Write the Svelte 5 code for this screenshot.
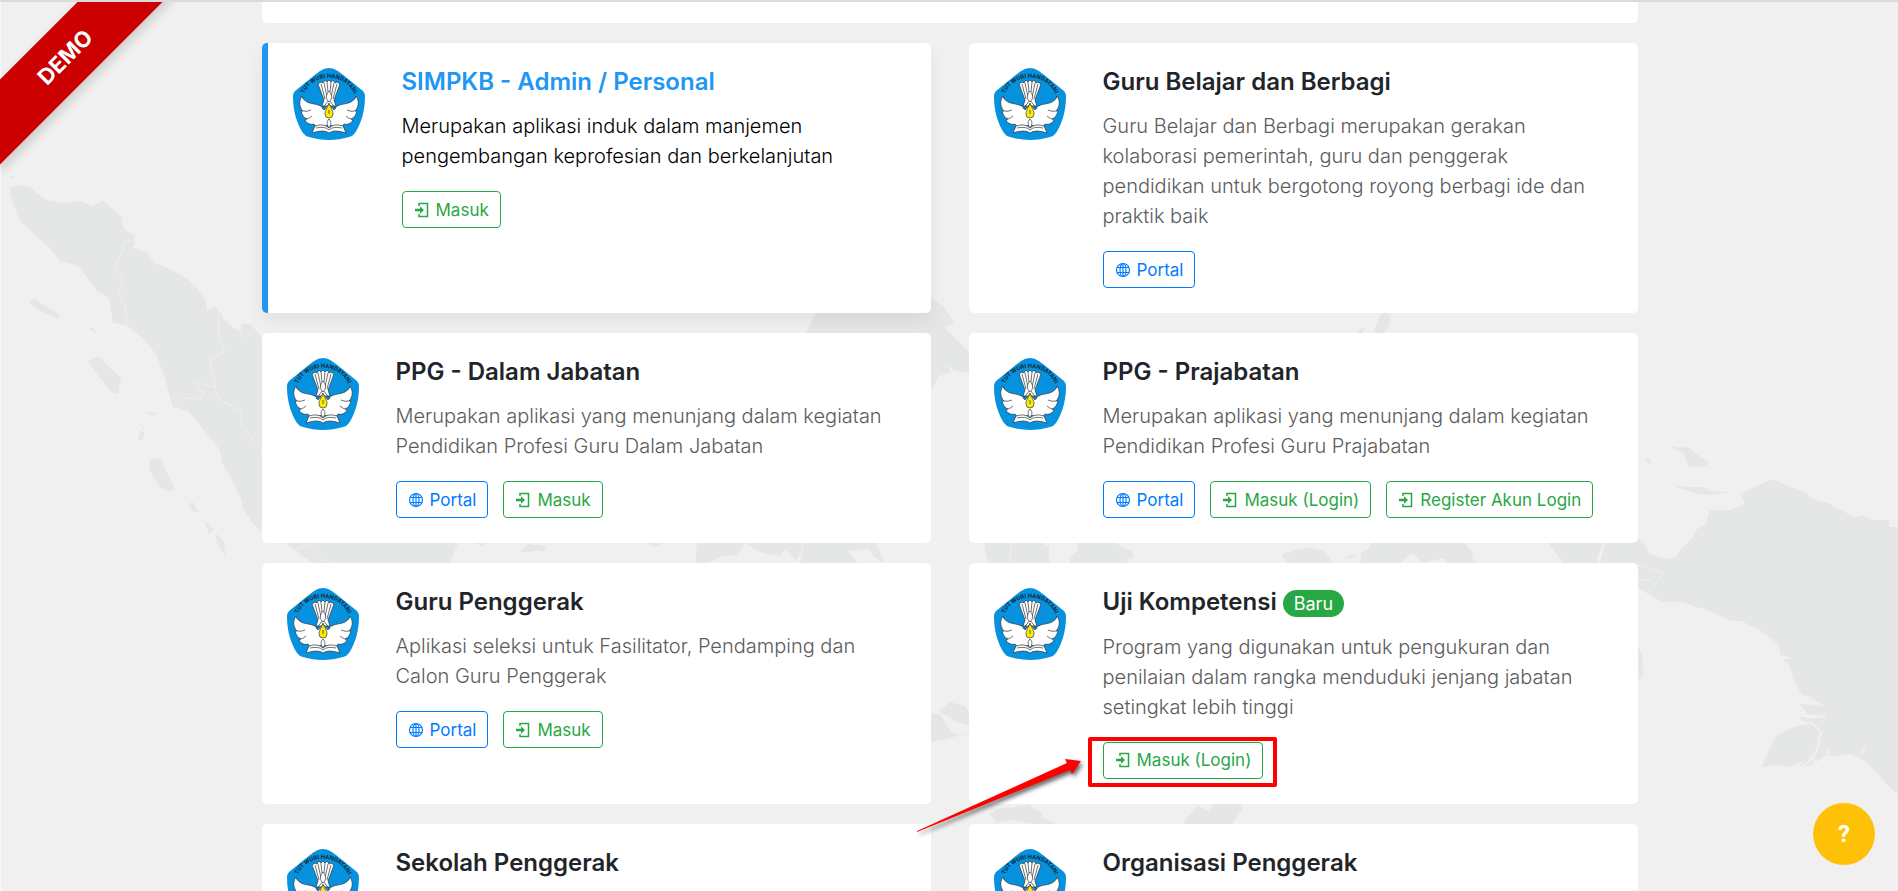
<script lang="ts">
  type Action = { label: string; kind: 'portal' | 'login'; marked?: boolean };
  type App = {
    title: string;
    text: string;
    actions: Action[];
    primary?: boolean;
    badge?: string;
  };

  const login = (label = 'Masuk', marked = false): Action => ({ label, kind: 'login', marked });
  const portal: Action = { label: 'Portal', kind: 'portal' };

  const apps: App[] = [
    {
      title: 'SIMPKB - Admin / Personal',
      text: 'Merupakan aplikasi induk dalam manjemen pengembangan keprofesian dan berkelanjutan',
      actions: [login()],
      primary: true
    },
    {
      title: 'Guru Belajar dan Berbagi',
      text: 'Guru Belajar dan Berbagi merupakan gerakan kolaborasi pemerintah, guru dan penggerak pendidikan untuk bergotong royong berbagi ide dan praktik baik',
      actions: [portal]
    },
    {
      title: 'PPG - Dalam Jabatan',
      text: 'Merupakan aplikasi yang menunjang dalam kegiatan Pendidikan Profesi Guru Dalam Jabatan',
      actions: [portal, login()]
    },
    {
      title: 'PPG - Prajabatan',
      text: 'Merupakan aplikasi yang menunjang dalam kegiatan Pendidikan Profesi Guru Prajabatan',
      actions: [portal, login('Masuk (Login)'), login('Register Akun Login')]
    },
    {
      title: 'Guru Penggerak',
      text: 'Aplikasi seleksi untuk Fasilitator, Pendamping dan Calon Guru Penggerak',
      actions: [portal, login()]
    },
    {
      title: 'Uji Kompetensi',
      badge: 'Baru',
      text: 'Program yang digunakan untuk pengukuran dan penilaian dalam rangka menduduki jenjang jabatan setingkat lebih tinggi',
      actions: [login('Masuk (Login)', true)]
    },
    { title: 'Sekolah Penggerak', text: '', actions: [] },
    { title: 'Organisasi Penggerak', text: '', actions: [] }
  ];
</script>

{#snippet logo()}
  <svg class="logo" viewBox="0 0 72 72" aria-hidden="true">
    <defs>
      <path id="motto-arc" d="M9 32A27.500 27.500 0 0 1 63 32" />
    </defs>
    <path fill="#0792df" d="M36 0C41 0 45 3 49 6L70 23Q72 25 72 29C72 43 68 56 62 65Q60 68 56 69C43 73 29 73 16 69Q12 68 10 65C4 56 0 43 0 29Q0 25 2 23L23 6C27 3 31 0 36 0Z" />
    <text class="motto"><textPath href="#motto-arc" startOffset="50%" text-anchor="middle">TUT WURI HANDAYANI</textPath></text>
    <g fill="#fff" stroke="#30343a" stroke-width="0.7" stroke-linejoin="round">
      <path d="M29 38L31 32L25 16L28 14L30 15L32 12L34 14L36 12L38 14L40 12L42 15L44 14L47 16L41 32L43 38Z" />
      <path d="M31 42C28 35 20 37 14 34Q9 31 9 28C5 34 7 40 10 43L8 43C9 47 11 50 14 51L12 52C14 56 18 57 21 56L24 60L36 57L48 60L51 56C54 57 58 56 60 52L58 51C61 50 63 47 64 43L62 43C65 40 67 34 63 28Q63 31 58 34C52 37 44 35 41 42L36 36Z" />
      <path d="M19 65L22 58Q31 55 36 60Q41 55 50 58L53 65Q41 61 36 65Q31 61 19 65Z" />
      <path fill="none" d="M28 16L32 31M31 15L34 29M34 14L35 24M38 14L37 24M41 15L38 29M44 16L40 31M10 43Q14 44 18 42M14 51Q17 50 19 48M62 43Q58 44 54 42M58 51Q55 50 53 48M23 60Q32 58 36 62Q40 58 49 60M29 41L36 32L43 41" />
      <path d="M36 23C32 28 33 31 36 34C39 31 40 28 36 23ZM36 51C33 54 34 57 36 60C38 57 39 54 36 51Z" />
    </g>
    <path fill="#ffec00" stroke="#30343a" stroke-width="0.7" d="M36 35C34 41 32 42 32 46Q32 50 36 50T40 46C40 42 38 41 36 35Z" />
    <path stroke="#30343a" stroke-width="0.8" d="M36 42V46" />
  </svg>
{/snippet}

{#snippet icon(kind: Action['kind'])}
  {#if kind === 'portal'}
    <svg class="icon" viewBox="0 0 16 16" fill="none" stroke="currentColor" stroke-width="1.2" aria-hidden="true">
      <circle cx="8" cy="8" r="6.500" />
      <ellipse cx="8" cy="8" rx="3" ry="6.500" />
      <path d="M8 1.500v13M2 5.500h12M2 10.500h12" />
    </svg>
  {:else}
    <svg class="icon" viewBox="0 0 16 16" fill="none" stroke="currentColor" stroke-width="1.500" aria-hidden="true">
      <path d="M5 4V1.500h8.500v13H5V12" />
      <path fill="currentColor" stroke="none" d="M1 6.800h5V4.200L10 8L6 11.800V9.200H1Z" />
    </svg>
  {/if}
{/snippet}

<div class="page">
  <svg class="map" viewBox="0 0 1898 891" preserveAspectRatio="xMidYMin slice" aria-hidden="true">
    <g fill="#e4e7e6">
      <path d="M9 188L18 185L30 187L37 193L46 200L62 203L80 201L92 206L103 201L112 208L121 216L124 229L134 235L135 244L132 248L146 252L155 263L172 270L187 279L196 287L206 301L207 311L213 307L217 308L225 321L240 332L246 342L240 329L242 324L250 324L262 337L300 365L350 410L397 475L407 520L403 535L458 543L450 563H312L290 546L262 532L253 524L242 507L242 501L232 480L222 463L220 450L207 434L196 420L188 411L178 408L173 408L168 390L164 375L157 356L145 340L129 327L122 324L113 323L109 298L98 292L90 282L78 266L69 263L60 261L50 248L40 240L19 220L13 203Z" />
      <path d="M29 303L34 298L42 304L51 309L58 314L60 320L51 316L42 312ZM88 361L98 356L110 368L121 378L118 394L112 393L99 377ZM89 329L93 327L96 333ZM142 349L149 352L145 351ZM145 412L159 413L152 416ZM138 419L145 431L143 431ZM140 430L145 433L142 441L138 440ZM150 459L161 458L165 469L171 480L175 490L169 492L160 487L149 470ZM188 504L193 502L196 509L200 514L192 510ZM205 521L214 529L209 535ZM215 533L225 542L224 548L226 556L218 546Z" />
      <path d="M10 176L15 175L13 179ZM815 315L835 292L867 300L905 300L931 298L943 306L954 322L945 328L960 343L969 352V373L954 371L948 364L951 373L939 376L933 388L920 405L888 430L858 450L876 543L884 563L874 557L868 549L848 551L858 563H800L802 551L796 561L785 549L780 556L762 553L745 543L738 555L722 556L708 563H695L697 543Z" />
      <path d="M931 714H940L952 733L965 736L972 726L956 722L939 711L950 702L965 706L972 716L978 712L990 730L960 735L943 740L931 742ZM474 543H486L482 546ZM520 552L528 544L546 546L544 553L538 550L530 552ZM646 543L665 542L656 547Z" />
      <path d="M984 543H1043L1049 547V563H988L985 551ZM1077 543H1115L1131 551L1134 557L1126 559L1128 563H1069L1072 555L1078 550ZM1281 555L1285 552L1291 553L1293 550L1312 548L1326 552L1332 563H1288ZM1345 558L1352 554L1357 555L1350 559ZM1372 543H1465L1472 552L1473 560L1479 563H1448L1444 558L1423 563L1412 553L1400 563H1360L1361 553L1368 549ZM1548 543H1604L1598 555L1597 563H1564L1555 552ZM1606 543H1638V563H1600L1603 551Z" />
      <path d="M989 814L1000 808L1015 807L1029 804L1041 813L1043 818L1057 824H1035L1010 820L997 823ZM1185 819L1199 806L1208 811L1215 803H1240L1242 810L1232 824H1185ZM1357 333L1362 328L1366 329L1361 333ZM1374 330L1380 315L1385 312L1391 316L1388 328L1384 333H1375Z" />
      <path d="M1638 538L1645 544L1649 554L1667 559L1676 556L1685 545L1692 538L1697 529L1706 524L1710 510L1730 510L1745 504L1740 494L1772 479L1786 485L1804 492L1812 499L1828 503L1854 517L1864 515L1872 520L1889 520V527H1898V794L1886 784L1878 773L1859 757L1848 754L1833 756L1825 755L1819 760L1814 763L1809 761L1815 747L1820 733L1809 725L1798 717L1812 717L1826 714L1808 715L1800 704L1819 705L1809 700L1801 693L1793 679L1789 664L1783 660L1792 658L1780 655L1779 645L1772 639L1758 629L1747 624L1742 621L1731 621L1710 611L1693 606L1684 602L1662 602L1645 592L1630 584V543Z" />
      <path d="M1762 767L1769 749L1777 735L1793 727L1810 723L1821 730L1819 742L1809 758L1790 767L1777 765ZM1668 445L1679 448L1686 446L1697 454L1709 463L1703 467L1688 466L1684 454ZM1671 485L1689 487L1703 487L1711 491L1731 492L1713 495L1698 494ZM1644 460L1650 458L1651 465ZM1638 645L1643 658L1643 675L1638 680ZM1646 680L1648 676L1645 686ZM1799 767L1808 756L1814 765Z" />
    </g>
    <path class="border" d="M130 240L125 242L120 257L115 264L123 280L119 290L126 310L127 326M218 313L219 337L225 352L210 360L216 388L195 382L204 394L200 399L183 398L173 407M214 390L220 400L241 411L241 425L262 450M332 565L311 545L295 550L270 535M803 543L801 556M1012 543L1009 563M1638 565L1664 573L1648 593M1638 580H1650" />
    <path class="strait" d="M1793 725L1812 723L1821 732L1818 746L1814 757L1800 768M1812 757L1817 765M1826 714L1822 717L1806 717M1824 706L1818 704L1806 696M1865 745L1861 755M1828 748V756" />
  </svg>

  <div class="ribbon"><span>DEMO</span></div>

  <main class="apps">
    <div class="card previous"></div>
    {#each apps as app}
      <article class="card" class:primary={app.primary}>
        {@render logo()}
        <div class="body">
          <h2>{app.title}{#if app.badge}{' '}<span class="badge">{app.badge}</span>{/if}</h2>
          <p>{app.text}</p>
          <div class="actions">
            {#each app.actions as action}
              <a class="btn {action.kind}" class:marked={action.marked} href="#{action.kind}">
                {@render icon(action.kind)}{action.label}
                {#if action.marked}
                  <svg class="pointer" viewBox="0 0 190 82" aria-hidden="true">
                    <path d="M3 78L153 10L151 6L167 8L158 21L156 17L3 79Z" />
                  </svg>
                {/if}
              </a>
            {/each}
          </div>
        </div>
      </article>
    {/each}
  </main>

  <button class="help" aria-label="Bantuan">?</button>
</div>

<style>
  :global(body) {
    background: #f0f0f0;
  }

  .page {
    position: relative;
    height: 100vh;
    overflow: hidden;
    box-sizing: border-box;
    padding-left: 1px;
    border-top: 2px solid #dadcdc;
    box-shadow: inset 1px 0 #fafafa;
    background: #f0f0f0;
    color: #212529;
    font-family: Inter, 'Liberation Sans', sans-serif;
  }

  .map {
    position: absolute;
    top: -2px;
    left: 0;
    width: 100%;
    height: 100vh;
  }

  .border,
  .strait {
    fill: none;
    stroke: #f0f0f0;
    stroke-width: 1;
  }

  .strait {
    stroke-width: 2;
  }

  .ribbon {
    position: absolute;
    top: 0;
    left: 0;
    z-index: 2;
    width: 176px;
    height: 176px;
    overflow: hidden;
  }

  .ribbon span {
    position: absolute;
    top: 25px;
    left: -60px;
    width: 250px;
    line-height: 60px;
    background: #c00;
    box-shadow: 0 5px 11px rgba(0, 0, 0, 0.15);
    color: #fff;
    font-size: 22px;
    font-weight: 700;
    text-align: center;
    text-shadow: 0 1px 1px rgba(0, 0, 0, 0.2);
    transform: rotate(-45deg);
  }

  .apps {
    position: relative;
    display: grid;
    grid-template-columns: 1fr 1fr;
    gap: 20px 38px;
    max-width: 1376px;
    margin: 0 auto;
    padding: 0 16px;
    box-sizing: content-box;
  }

  .card {
    display: flex;
    align-items: flex-start;
    gap: 37px;
    box-sizing: border-box;
    padding: 25px;
    border-radius: 5px;
    background: #fff;
  }

  .card.primary {
    border-left: 6px solid #2196f3;
    box-shadow: 0 9px 18px rgba(0, 0, 0, 0.06);
  }

  .card.previous {
    grid-column: 1 / -1;
    height: 21px;
    padding: 0;
    border-radius: 0 0 5px 5px;
  }

  .logo {
    flex: none;
    width: 72px;
    height: 72px;
  }

  .motto {
    fill: #102a3a;
    font-family: Roboto, sans-serif;
    font-size: 6px;
    font-weight: 700;
  }

  .body {
    flex: 1;
    min-width: 0;
  }

  h2 {
    margin: 0 0 15px;
    font-size: 24px;
    font-weight: 600;
    line-height: 28px;
  }

  .primary h2 {
    color: #2196f3;
  }

  .badge {
    display: inline-block;
    padding: 0 11px;
    border-radius: 14px;
    background: #28a745;
    color: #fff;
    font-size: 18px;
    font-weight: 400;
    line-height: 27px;
    vertical-align: middle;
  }

  p {
    margin: 0 0 20px;
    color: #5c5c5c;
    font-size: 20px;
    font-weight: 340;
    line-height: 30px;
  }

  .primary p {
    color: #000;
  }

  .actions {
    display: flex;
    flex-wrap: wrap;
    gap: 15px;
  }

  .btn {
    position: relative;
    display: flex;
    align-items: center;
    gap: 6px;
    box-sizing: border-box;
    height: 37px;
    padding: 0 11px;
    border: 1px solid;
    border-radius: 4px;
    font-size: 17px;
    text-decoration: none;
  }

  .btn.portal {
    color: #007bff;
  }

  .btn.login {
    color: #28a745;
  }

  .icon {
    width: 16px;
    height: 16px;
  }

  .marked::before {
    content: '';
    position: absolute;
    inset: -6px -15px -9px -16px;
    border: 4px solid #f00;
    border-radius: 2px;
  }

  .pointer {
    position: absolute;
    top: 10px;
    right: 100%;
    width: 190px;
    height: 82px;
    fill: #f00;
    filter: drop-shadow(2px 3px 2px rgba(0, 0, 0, 0.6));
  }

  .help {
    position: absolute;
    right: 23px;
    bottom: 26px;
    width: 62px;
    height: 62px;
    padding: 0;
    border: 0;
    border-radius: 50%;
    background: #ffc107;
    color: #fff;
    font-family: Roboto, sans-serif;
    font-size: 24px;
    font-weight: 700;
  }
</style>
